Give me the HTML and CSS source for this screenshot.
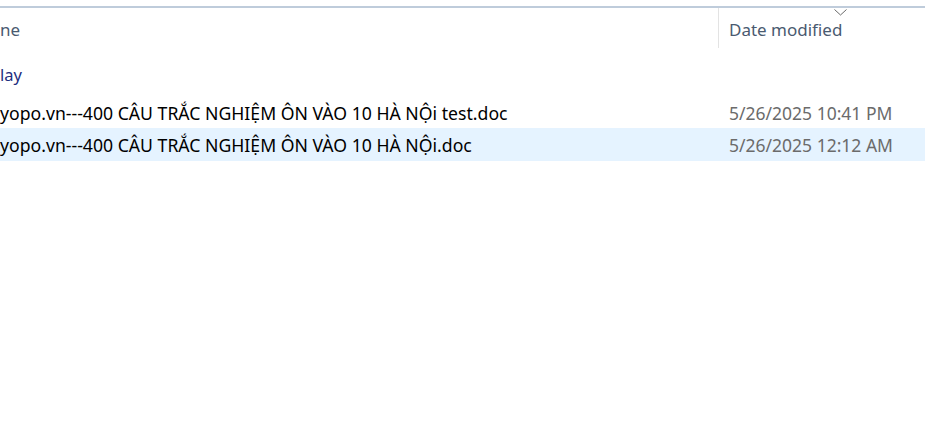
FILE: index.html
```html
<!DOCTYPE html>
<html lang="vi">
<head>
<meta charset="utf-8">
<title>Explorer</title>
<link rel="stylesheet" href="styles.css">
</head>
<body>
<div class="pane">
  <div class="topline"></div>
  <div class="header">
    <div class="col-name"><span class="hdr-text">ne</span></div>
    <div class="col-date"><span class="hdr-text">Date modified</span></div>
    <svg class="sort" width="13" height="7" viewBox="0 0 13 7"><path d="M0.5 0.5 L6.5 6 L12.5 0.5" fill="none" stroke="#6a6a6a" stroke-width="1"/></svg>
  </div>
  <div class="group">lay</div>
  <div class="rows">
    <div class="row">
      <div class="c-name">yopo.vn---400 CÂU TRẮC NGHIỆM ÔN VÀO 10 HÀ NỘi test.doc</div>
      <div class="c-date">5/26/2025 10:41 PM</div>
    </div>
    <div class="row selected">
      <div class="c-name">yopo.vn---400 CÂU TRẮC NGHIỆM ÔN VÀO 10 HÀ NỘi.doc</div>
      <div class="c-date">5/26/2025 12:12 AM</div>
    </div>
  </div>
</div>
</body>
</html>
```
FILE: styles.css
```css
html, body {
  margin: 0;
  padding: 0;
  background: #ffffff;
}
body {
  font-family: "Noto Sans", "Open Sans", sans-serif;
  width: 925px;
  height: 424px;
  overflow: hidden;
}
.pane {
  padding-top: 6px;
}
.topline {
  height: 2px;
  background: #bfccdb;
}
.header {
  position: relative;
  display: flex;
  height: 40px;
}
.col-name {
  width: 718px;
  border-right: 1px solid #e3e3e3;
  display: flex;
  align-items: center;
}
.col-date {
  flex: 1;
  padding-left: 10px;
  display: flex;
  align-items: center;
}
.hdr-text {
  font-size: 17px;
  color: #4a5a70;
  padding-top: 3px;
}
.sort {
  position: absolute;
  left: 834px;
  top: 1px;
}
.group {
  height: 47px;
  display: flex;
  align-items: center;
  font-size: 16.5px;
  color: #1f2f80;
  padding-top: 5px;
  box-sizing: border-box;
}
.rows {
  display: flex;
  flex-direction: column;
}
.row {
  display: flex;
  height: 33px;
  align-items: center;
  font-size: 17.5px;
  padding-top: 2px;
  box-sizing: border-box;
}
.row.selected {
  background: #e5f3ff;
  padding-top: 1px;
}
.c-name {
  width: 729px;
  color: #000000;
  white-space: nowrap;
  font-size: 17.65px;
}
.c-date {
  color: #6b6b6b;
  white-space: nowrap;
}
```
